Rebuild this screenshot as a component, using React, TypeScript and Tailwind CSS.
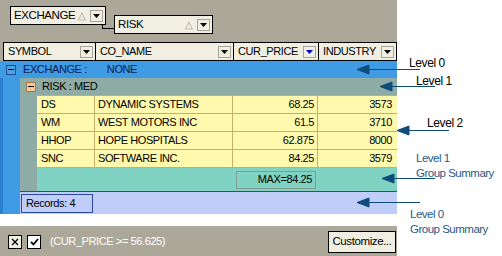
import React from "react";

const Tri = ({ color = "#000" }: { color?: string }) => (
  <svg width="7" height="4" viewBox="0 0 7 4">
    <path d="M0 0h7L3.5 4z" fill={color} />
  </svg>
);

const DropBtn = ({ color }: { color?: string }) => (
  <div className="w-[13px] h-[12px] border border-[#a7a59a] bg-[#f1efe2] flex items-center justify-center">
    <Tri color={color} />
  </div>
);

function GroupChip({ label, w }: { label: string; w: string }) {
  return (
    <div className={`${w} h-[19px] border border-black bg-[#f1efe2] flex items-center pl-[3px] pr-[2px] text-[11.5px]`}>
      <span className="flex-1">{label}</span>
      <span className="text-[#9c988c] text-[10px] mr-[4px]">△</span>
      <DropBtn />
    </div>
  );
}

const cols = [
  { name: "SYMBOL", w: "w-[92px]" },
  { name: "CO_NAME", w: "w-[138px]" },
  { name: "CUR_PRICE", w: "w-[85px]", sorted: true },
  { name: "INDUSTRY", w: "w-[78px]" },
];

const rows = [
  ["DS", "DYNAMIC SYSTEMS", "68.25", "3573"],
  ["WM", "WEST MOTORS INC", "61.5", "3710"],
  ["HHOP", "HOPE HOSPITALS", "62.875", "8000"],
  ["SNC", "SOFTWARE INC.", "84.25", "3579"],
];

function MinusBox({ className }: { className: string }) {
  return (
    <div className={`w-[10px] h-[10px] border flex items-center justify-center ${className}`}>
      <div className="w-[6px] h-[1px] bg-black" />
    </div>
  );
}

export default function App() {
  return (
    <div className="relative w-[502px] h-[256px] bg-white font-['Liberation_Sans',Arial,sans-serif] text-[11px] tracking-[-0.4px] leading-none text-black">
      <div className="w-[397px] flex flex-col">
        {/* group by area */}
        <div className="relative h-[42px] bg-[#aca899] flex items-start pl-[10px]">
          <div className="mt-[6px]">
            <GroupChip label="EXCHANGE" w="w-[96px]" />
          </div>
          <div className="ml-[8px] mt-[15px]">
            <GroupChip label="RISK" w="w-[99px]" />
          </div>
          <div className="absolute left-[102px] top-[25px] w-[12px] h-[4px] border-l border-b border-black" />
        </div>

        {/* header */}
        <div className="h-[19px] flex bg-[#aca899]">
          <div className="ml-[3px] flex border border-black border-r-0 bg-[#f1efe2]">
            {cols.map((c) => (
              <div key={c.name} className={`${c.w} h-full flex items-center pl-[4px] pr-[2px] border-r border-black`}>
                <span className="flex-1">{c.name}</span>
                <DropBtn color={c.sorted ? "#0000e0" : "#000"} />
              </div>
            ))}
          </div>
        </div>

        {/* level 0 group */}
        <div className="bg-[#3f9be3]">
          <div className="h-[17px] flex items-center pl-[6px] text-[#0a1a50]">
            <MinusBox className="border-[#1d4e90] bg-[#4aa3e8]" />
            <span className="ml-[7px]">EXCHANGE :</span>
            <span className="ml-[20px]">NONE</span>
          </div>
          <div className="flex border-l-[3px] border-[#2d7fd0]">
            <div className="w-[17px]" />
            <div className="flex-1 flex flex-col">
              {/* level 1 group */}
              <div className="bg-[#8eaca5]">
                <div className="h-[17px] flex items-center pl-[6px]">
                  <MinusBox className="border-[#a0784a] bg-[#f8c890]" />
                  <span className="ml-[6px]">RISK : MED</span>
                </div>
                <div className="flex">
                  <div className="w-[17px]" />
                  <div className="flex-1 flex flex-col">
                    <div className="bg-[#fff9ad] border-b border-[#c6ae6c]">
                      {rows.map((r) => (
                        <div key={r[0]} className="h-[18px] flex border-t border-[#c6ae6c]">
                          <div className="w-[58px] pl-[4px] flex items-center border-r border-[#c6ae6c]">{r[0]}</div>
                          <div className="w-[138px] pl-[3px] flex items-center border-r border-[#c6ae6c]">{r[1]}</div>
                          <div className="w-[85px] pr-[3px] flex items-center justify-end border-r border-[#c6ae6c]">{r[2]}</div>
                          <div className="w-[77px] pr-[3px] flex items-center justify-end">{r[3]}</div>
                        </div>
                      ))}
                    </div>
                    <div className="h-[23px] bg-[#80d2c2] flex items-center pl-[199px]">
                      <div className="w-[80px] h-[18px] border border-[#7ea08e] flex items-center justify-end pr-[3px]">MAX=84.25</div>
                    </div>
                  </div>
                </div>
              </div>
              {/* level 0 summary */}
              <div className="h-[23px] bg-[#c0cdf9] border-t border-[#2c4a9c] flex items-center pl-[1px]">
                <div className="w-[72px] h-[19px] border border-[#2c4a9c] flex items-center pl-[4px]">Records: 4</div>
              </div>
            </div>
          </div>
        </div>

        <div className="h-[12px] bg-white" />

        {/* filter bar */}
        <div className="h-[31px] bg-[#aca899] flex items-center pl-[8px] pr-[1px]">
          <div className="w-[14px] h-[14px] border border-black bg-[#f1efe2] flex items-center justify-center">
            <svg width="8" height="8" viewBox="0 0 8 8">
              <path d="M1 1L7 7M7 1L1 7" stroke="#000" strokeWidth="1.3" />
            </svg>
          </div>
          <div className="ml-[5px] w-[14px] h-[14px] border border-black bg-white flex items-center justify-center">
            <svg width="9" height="8" viewBox="0 0 9 8">
              <path d="M1 4L3.5 6.5L8 1" stroke="#000" strokeWidth="1.8" fill="none" />
            </svg>
          </div>
          <span className="ml-[9px] text-white">(CUR_PRICE &gt;= 56.625)</span>
          <div className="ml-auto w-[68px] h-[22px] border border-black bg-[#f1efe2] flex items-center justify-center text-[11.5px]">Customize...</div>
        </div>
      </div>

      {/* annotations */}
      <svg className="absolute left-0 top-0" width="502" height="256">
        <g stroke="#0e4c7c" strokeWidth="1" fill="#0e4c7c">
          <line x1="365" y1="69.5" x2="420" y2="69.5" />
          <path d="M357 69.5L369 65V74z" />
          <line x1="388" y1="86.5" x2="435" y2="86.5" />
          <path d="M380 86.5L392 82V91z" />
          <line x1="405" y1="130.5" x2="449" y2="130.5" />
          <path d="M397 130.5L409 126V135z" />
          <line x1="390" y1="178.5" x2="435" y2="178.5" />
          <path d="M382 178.5L394 174V183z" />
          <line x1="365" y1="202.5" x2="420" y2="202.5" />
          <path d="M357 202.5L369 198V207z" />
        </g>
      </svg>
      <div className="absolute left-[409px] top-[57px] text-[12px] whitespace-nowrap">Level 0</div>
      <div className="absolute left-[416px] top-[75px] text-[12px] whitespace-nowrap">Level 1</div>
      <div className="absolute left-[427px] top-[117px] text-[12px] whitespace-nowrap">Level 2</div>
      <div className="absolute left-[416px] top-[151px] text-[11.5px] tracking-[-0.5px] leading-[15px] whitespace-nowrap text-[#1c5a8a]">
        Level 1<br />Group Summary
      </div>
      <div className="absolute left-[410px] top-[207px] text-[11.5px] tracking-[-0.5px] leading-[15px] whitespace-nowrap text-[#1c5a8a]">
        Level 0<br />Group Summary
      </div>
    </div>
  );
}
